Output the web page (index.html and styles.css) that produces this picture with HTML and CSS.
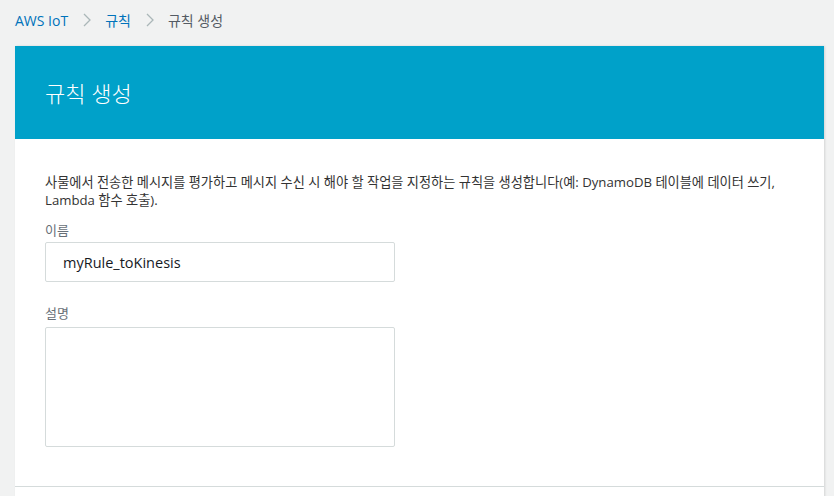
FILE: index.html
```html
<!DOCTYPE html>
<html lang="ko">
<head>
<meta charset="utf-8">
<link rel="stylesheet" href="styles.css">
</head>
<body>
<nav class="crumbs">
  <a class="crumb-link">AWS IoT</a>
  <svg class="chev" width="10" height="14" viewBox="0 0 10 14"><polyline points="2,1 8,7 2,13" fill="none" stroke="#aab7b8" stroke-width="1.3"/></svg>
  <a class="crumb-link">규칙</a>
  <svg class="chev" width="10" height="14" viewBox="0 0 10 14"><polyline points="2,1 8,7 2,13" fill="none" stroke="#aab7b8" stroke-width="1.3"/></svg>
  <span class="crumb-current">규칙 생성</span>
</nav>
<section class="card">
  <header class="card-head"><h1>규칙 생성</h1></header>
  <div class="card-body">
    <p class="desc">사물에서 전송한 메시지를 평가하고 메시지 수신 시 해야 할 작업을 지정하는 규칙을 생성합니다(예: DynamoDB 테이블에 데이터 쓰기, Lambda 함수 호출).</p>
    <label class="label">이름</label>
    <div class="input">myRule_toKinesis</div>
    <label class="label label-2">설명</label>
    <div class="textarea"></div>
  </div>
  <div class="card-foot"></div>
</section>
</body>
</html>
```
FILE: styles.css
```css
* { box-sizing: border-box; }
html, body { margin: 0; padding: 0; }
body {
  background: #f1f2f2;
  font-family: "Open Sans", "Noto Sans CJK KR", sans-serif;
  color: #333;
  width: 834px;
  height: 496px;
  overflow: hidden;
}
.crumbs {
  display: flex;
  align-items: center;
  height: 46px;
  padding: 0 15px 6px;
  font-size: 14px;
}
.crumb-link { color: #0073bb; }
.crumb-current { color: #545b64; }
.chev { margin: 0 13px 0 14px; }
.card {
  margin: 0 10px 0 15px;
  background: #fff;
  box-shadow: 1px 0 2px rgba(0,0,0,0.12);
}
.card-head {
  background: #00a1c9;
  height: 93px;
  display: flex;
  align-items: center;
  padding: 0 30px;
}
.card-head h1 {
  margin: 0;
  font-size: 22px;
  font-weight: 300;
  color: #fff;
  padding-bottom: 2px;
}
.card-body {
  padding: 34px 30px 0;
  height: 348px;
  border-bottom: 1px solid #d5dbdb;
}
.desc {
  margin: 0;
  font-size: 13.2px;
  line-height: 18px;
  color: #333;
}
.label {
  display: block;
  margin-top: 12px;
  font-size: 13px;
  line-height: 18px;
  color: #687078;
}
.label-2 { margin-top: 22px; }
.input {
  margin-top: 3px;
  width: 350px;
  height: 40px;
  border: 1px solid #d5dbdb;
  border-radius: 2px;
  padding: 0 17px;
  display: flex;
  align-items: center;
  font-size: 14.5px;
  color: #16191f;
}
.textarea {
  margin-top: 5px;
  width: 350px;
  height: 120px;
  border: 1px solid #d5dbdb;
  border-radius: 2px;
}
.card-foot { height: 20px; }
```
